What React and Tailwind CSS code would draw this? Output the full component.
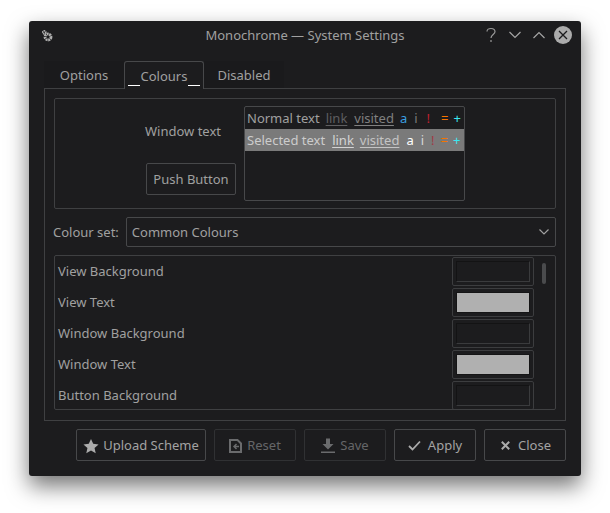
import React from "react";

const Swatch = ({ filled }) => (
  <div className="w-[82px] h-[29px] border border-[#3c3d3f] rounded-[2px] p-[3px]">
    {filled ? (
      <div className="w-full h-full bg-[#b0b0b0] border border-[#151516]" />
    ) : (
      <div className="w-full h-full border border-[#3a3b3d] border-t-[#131314] border-l-[#131314] bg-[#1c1c1e]" />
    )}
  </div>
);

const Btn = ({ w, dim, icon, children }) => (
  <div className={`${w} h-[32px] pt-px flex items-center justify-center gap-[5px] rounded-[2px] border ${dim ? "border-[#303133] text-[#656668]" : "border-[#47484a] text-[#a3a3a3]"}`}>
    {icon}
    <span>{children}</span>
  </div>
);

const Row = ({ label, filled }) => (
  <div className="flex items-center justify-between h-[31px]">
    <span className="pl-[3px] mt-px">{label}</span>
    <Swatch filled={filled} />
  </div>
);

export default function App() {
  return (
    <div className="w-[610px] h-[513px] bg-white overflow-hidden pt-[21px] pl-[29px] text-[13px] text-[#a0a0a0]" style={{ fontFamily: '"Noto Sans", sans-serif' }}>
      <div className="w-[552px] h-[455px] bg-[#1c1c1e] rounded-[3px] shadow-[0_10px_22px_rgba(0,0,0,0.55)] flex flex-col">
        {/* title bar */}
        <div className="relative h-[40px] flex items-start justify-center pt-[5px] shrink-0">
          <span className="leading-[18px] text-[#a0a0a0]">Monochrome — System Settings</span>
          <svg className="absolute left-[11px] top-[7px]" width="14" height="16" viewBox="0 0 14 16" fill="none" stroke="#b0b0b0">
            <circle cx="8" cy="9" r="3" strokeWidth="2.8" strokeDasharray="1.9 0.6" />
            <circle cx="4.3" cy="4.3" r="1.5" strokeWidth="1.7" strokeDasharray="1.4 0.5" />
          </svg>
          <svg className="absolute left-[455px] top-[5px]" width="14" height="18" viewBox="0 0 14 18" fill="none" stroke="#9a9a9a" strokeWidth="1.2">
            <path d="M3 5.5C3 3.5 4.8 2.5 7 2.5s4 1.2 4 3.2c0 2.7-4 3-4 6.3" />
            <path d="M7 14v2" />
          </svg>
          <svg className="absolute left-[479px] top-[9px]" width="14" height="10" viewBox="0 0 14 10" fill="none" stroke="#a5a5a5" strokeWidth="1.2"><path d="M1.5 2l5.5 5.5L12.5 2" /></svg>
          <svg className="absolute left-[503px] top-[9px]" width="14" height="10" viewBox="0 0 14 10" fill="none" stroke="#a5a5a5" strokeWidth="1.2"><path d="M1.5 8L7 2.5 12.5 8" /></svg>
          <div className="absolute left-[525px] top-[5px] w-[18px] h-[18px] rounded-full bg-[#acacac] flex items-center justify-center">
            <svg width="10" height="10" viewBox="0 0 10 10" stroke="#1c1c1e" strokeWidth="1.3"><path d="M1 1l8 8M9 1L1 9" /></svg>
          </div>
        </div>

        {/* tabs */}
        <div className="flex pl-[15px] h-[27px] shrink-0 relative z-10">
          <div className="w-[80px] h-[27px] bg-[#1a1a1c] flex items-center justify-center pt-[3px]">Options</div>
          <div className="w-[80px] h-[28px] bg-[#1c1c1e] border border-[#47484a] border-b-0 rounded-t-[3px] flex items-center justify-center pt-[3px] relative">
            Colours
            <div className="absolute left-[3px] bottom-[3px] w-[12px] h-px bg-white" />
            <div className="absolute right-[3px] bottom-[3px] w-[12px] h-px bg-white" />
          </div>
          <div className="w-[80px] h-[27px] bg-[#1a1a1c] flex items-center justify-center pt-[3px]">Disabled</div>
        </div>

        {/* panel */}
        <div className="mx-[15px] w-[522px] h-[333px] border border-[#3f4042] p-[9px] shrink-0 flex flex-col">
          <div className="h-[111px] border border-[#3f4042] rounded-[2px] flex shrink-0 relative">
            <div className="w-[181px] flex flex-col items-end pt-[23px]">
              <div className="leading-[18px] pr-[15px]">Window text</div>
              <div className="mt-[23px] w-[90px] h-[32px] pt-px border border-[#47484a] rounded-[2px] flex items-center justify-center">Push Button</div>
            </div>
            <div className="ml-[8px] mt-[7px] w-[221px] h-[95px] border border-[#47484a] rounded-[2px] pt-px">
              <div className="h-[21px] flex items-center pl-[2px] whitespace-pre text-[#a0a0a0]">
                <span>Normal text</span>
                <span className="ml-[6px] text-[#5e5e60] underline underline-offset-2">link</span>
                <span className="ml-[7px] text-[#808080] underline underline-offset-2">visited</span>
                <span className="ml-[6px] text-[#3a9fe0]">a</span>
                <span className="ml-[7px] text-[#7a7a7a]">i</span>
                <span className="ml-[9px] text-[#c0202f]">!</span>
                <span className="ml-[11px] text-[#f67400]">=</span>
                <span className="ml-[5px] text-[#3ae8f0]">+</span>
              </div>
              <div className="h-[22px] pt-[2px] bg-[#7a7a7a] flex items-center pl-[2px] whitespace-pre text-[#cccccc]">
                <span>Selected text</span>
                <span className="ml-[7px] text-[#d4d4d4] underline underline-offset-2">link</span>
                <span className="ml-[6px] text-[#c4c4c4] underline underline-offset-2">visited</span>
                <span className="ml-[7px] text-white">a</span>
                <span className="ml-[7px] text-[#d8d8d8]">i</span>
                <span className="ml-[7px] text-[#a03a46]">!</span>
                <span className="ml-[6px] text-[#f67400]">=</span>
                <span className="ml-[5px] text-[#3ae8f0]">+</span>
              </div>
            </div>
          </div>

          <div className="flex items-center h-[30px] mt-[8px] shrink-0">
            <span className="whitespace-pre -ml-px pt-[2px]">Colour set:</span>
            <div className="ml-[7px] flex-1 h-[30px] border border-[#47484a] rounded-[2px] flex items-center justify-between pl-[5px] pr-[5px]">
              <span className="pt-[2px]">Common Colours</span>
              <svg width="12" height="8" viewBox="0 0 12 8" fill="none" stroke="#a0a0a0" strokeWidth="1.2"><path d="M1.5 1.5L6 6l4.5-4.5" /></svg>
            </div>
          </div>

          <div className="relative mt-[8px] h-[155px] overflow-hidden border border-[#3f4042] rounded-[2px] pr-[21px] shrink-0">
            <Row label="View Background" />
            <Row label="View Text" filled />
            <Row label="Window Background" />
            <Row label="Window Text" filled />
            <Row label="Button Background" />
            <div className="absolute right-[9px] top-[7px] w-[4px] h-[21px] bg-[#4a4b4d] rounded-[2px]" />
          </div>
        </div>

        {/* buttons */}
        <div className="flex justify-end gap-[8px] pr-[15px] mt-[8px]">
          <Btn w="w-[130px]" icon={
            <svg className="-mr-px" width="16" height="16" viewBox="0 0 18 17" fill="#acacac"><path d="M9 0.5l2.5 5.6 6 .6-4.5 4 1.3 6L9 13.6 3.7 16.7l1.3-6-4.5-4 6-.6z" /></svg>
          }>Upload Scheme</Btn>
          <Btn w="w-[82px]" dim icon={
            <svg width="13" height="14" viewBox="0 0 13 14" fill="none" stroke="#6a6b6d" strokeWidth="2"><path d="M1 1h7.5L12 4.5V13H1z" /><path d="M10 7.5H5.5M7.5 5L5 7.5 7.5 10" strokeWidth="1.5" /></svg>
          }>Reset</Btn>
          <Btn w="w-[82px]" dim icon={
            <svg width="14" height="16" viewBox="0 0 14 16" fill="#6a6b6d"><path d="M5 0.5h4V6h3.5L7 11.5 1.5 6H5z" /><path d="M0 13.5h14v1.5H0z" /></svg>
          }>Save</Btn>
          <Btn w="w-[82px]" icon={
            <svg className="mr-[2px]" width="13" height="11" viewBox="0 0 13 11" fill="none" stroke="#ababab" strokeWidth="1.8"><path d="M1 6l3.5 3.5L12 1.5" /></svg>
          }>Apply</Btn>
          <Btn w="w-[82px]" icon={
            <svg className="ml-[2px] mr-[3px]" width="9" height="9" viewBox="0 0 9 9" fill="none" stroke="#ababab" strokeWidth="2"><path d="M.8.8l7.4 7.4M8.2.8L.8 8.2" /></svg>
          }>Close</Btn>
        </div>
      </div>
    </div>
  );
}
